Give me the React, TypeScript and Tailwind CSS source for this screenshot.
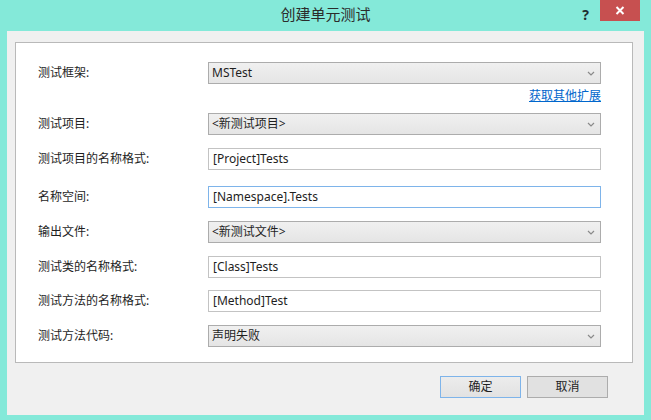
import React from 'react';

const font = { fontFamily: '"Noto Sans", "Noto Sans CJK SC", sans-serif' };

const Chevron: React.FC = () => (
    <svg width="8" height="5" viewBox="0 0 8 5" className="shrink-0">
        <path d="M1 1 L4 4 L7 1" fill="none" stroke="#8a8a8a" strokeWidth="1.2" />
    </svg>
);

const Combo: React.FC<{ value: string }> = ({ value }) => (
    <div className="w-[393px] h-[22px] flex items-center justify-between pl-[3px] pr-[5px] border border-[#acacac] bg-gradient-to-b from-[#f0f0f0] to-[#e5e5e5] text-[12px] text-[#1e1e1e]">
        <span>{value}</span>
        <Chevron />
    </div>
);

const TextBox: React.FC<{ value: string; focused?: boolean }> = ({ value, focused }) => (
    <div
        className={
            focused
                ? 'w-[393px] h-[22px] flex items-center pl-[4px] border border-[#7eb4ea] bg-white text-[12px] text-[#1e1e1e]'
                : 'w-[393px] h-[22px] flex items-center pl-[4px] border border-[#c3c3c3] bg-white text-[12px] text-[#1e1e1e]'
        }
    >
        {value}
    </div>
);

const Row: React.FC<{ label: string; className: string; children: React.ReactNode }> = ({ label, className, children }) => (
    <div className={`flex items-center ${className}`}>
        <div className="w-[170px] text-[12px] text-[#1e1e1e]">{label}</div>
        {children}
    </div>
);

export default function App() {
    return (
        <div className="w-[651px] h-[420px] bg-[#84e9d9] flex flex-col px-[7px] pb-[5px] overflow-hidden" style={font}>
            {/* Title bar */}
            <div className="h-[31px] relative flex items-center justify-center shrink-0">
                <span className="text-[15px] text-[#2b2b2b] mt-[-2px]">创建单元测试</span>
                <span className="absolute right-[55px] top-[4px] text-[14px] font-bold text-[#1e2f2f]">?</span>
                <div className="absolute right-[4px] top-0 w-[40px] h-[21px] bg-[#c75050] flex items-center justify-center">
                    <svg width="10" height="9" viewBox="0 0 10 9">
                        <path d="M1.5 1 L8.5 8 M8.5 1 L1.5 8" stroke="white" strokeWidth="2" />
                    </svg>
                </div>
            </div>

            {/* Client area */}
            <div className="flex-1 bg-[#f0f0f0] flex flex-col pl-[8px] pr-[11px] pt-[11px]">
                <div className="h-[321px] bg-white border border-[#b9b9b9] pl-[22px] flex flex-col">
                    <Row label="测试框架:" className="mt-[19px]">
                        <Combo value="MSTest" />
                    </Row>
                    <div className="flex justify-end pr-[31px] mt-[4px] h-[16px] items-center">
                        <span className="text-[12px] text-[#0066cc] underline">获取其他扩展</span>
                    </div>
                    <Row label="测试项目:" className="mt-[9px]">
                        <Combo value="<新测试项目>" />
                    </Row>
                    <Row label="测试项目的名称格式:" className="mt-[13px]">
                        <TextBox value="[Project]Tests" />
                    </Row>
                    <Row label="名称空间:" className="mt-[16px]">
                        <TextBox value="[Namespace].Tests" focused />
                    </Row>
                    <Row label="输出文件:" className="mt-[13px]">
                        <Combo value="<新测试文件>" />
                    </Row>
                    <Row label="测试类的名称格式:" className="mt-[13px]">
                        <TextBox value="[Class]Tests" />
                    </Row>
                    <Row label="测试方法的名称格式:" className="mt-[12px]">
                        <TextBox value="[Method]Test" />
                    </Row>
                    <Row label="测试方法代码:" className="mt-[13px]">
                        <Combo value="声明失败" />
                    </Row>
                </div>

                <div className="flex justify-end gap-[6px] mt-[13px] pr-[25px]">
                    <button className="w-[81px] h-[22px] border border-[#7eb4ea] bg-gradient-to-b from-[#ececec] to-[#e2e2e2] text-[12px] text-[#1e1e1e]">
                        确定
                    </button>
                    <button className="w-[81px] h-[22px] border border-[#acacac] bg-[#e1e1e1] text-[12px] text-[#1e1e1e]">
                        取消
                    </button>
                </div>
            </div>
        </div>
    );
}
